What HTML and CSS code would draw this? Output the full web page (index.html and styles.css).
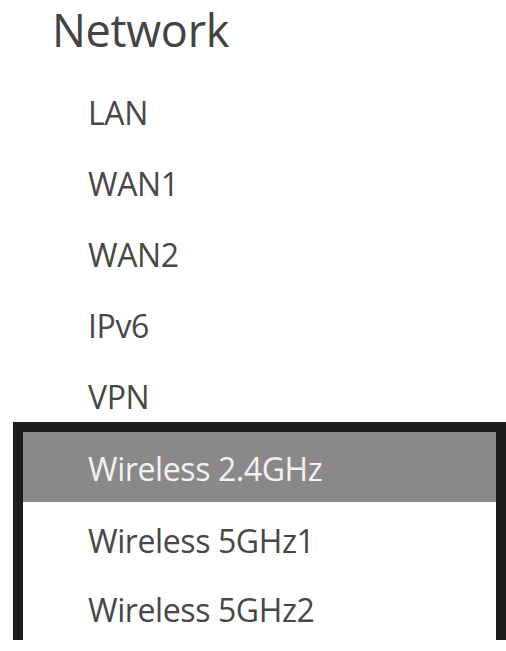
FILE: index.html
```html
<!DOCTYPE html>
<html lang="en">
<head>
    <meta charset="UTF-8">
    <meta name="viewport" content="width=device-width, initial-scale=1.0">
    <title>Network</title>
    <link rel="stylesheet" href="styles.css">
</head>
<body>
    <div class="menu">
        <div class="title">Network</div>
        <ul class="items">
            <li>LAN</li>
            <li>WAN1</li>
            <li>WAN2</li>
            <li>IPv6</li>
            <li>VPN</li>
        </ul>
        <ul class="items wireless">
            <li class="active">Wireless 2.4GHz</li>
            <li>Wireless 5GHz1</li>
            <li>Wireless 5GHz2</li>
        </ul>
    </div>
</body>
</html>
```

FILE: styles.css
```css
body {
    margin: 0;
    background-color: #ffffff;
    font-family: "Open Sans", "Noto Sans", sans-serif;
    color: #474747;
}
.menu {
    width: 506px;
}
.title {
    font-size: 45px;
    line-height: 60px;
    padding-left: 52px;
    color: #434343;
    letter-spacing: -0.3px;
}
.items {
    list-style: none;
    margin: 0;
    padding: 0;
    margin-top: 17px;
}
.items li {
    height: 71px;
    line-height: 71px;
    padding-left: 88px;
    font-size: 32px;
    letter-spacing: -0.4px;
}
.wireless {
    margin: 0 10px 0 23px;
    outline: 10px solid #1c1c1c;
}
.wireless li {
    box-sizing: border-box;
    height: 69px;
    line-height: 69px;
    padding-top: 4px;
    padding-left: 65px;
}
.wireless li.active {
    height: 70px;
    padding-top: 2px;
    background-color: #8b8889;
    color: #f2f2f2;
}
```
